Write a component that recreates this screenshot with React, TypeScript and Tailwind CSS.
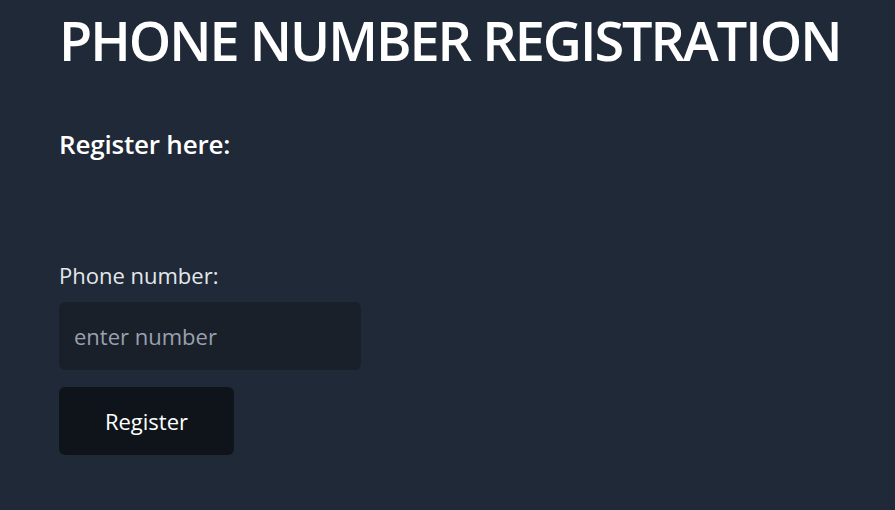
export default function App() {
  return (
    <main className="min-h-screen w-full bg-[#1f2937] text-white pl-[59px] font-['Open_Sans','Noto_Sans',sans-serif]">
      {/* Heading */}
      <h1 className="pt-[13px] text-[54px] font-semibold leading-none tracking-[-2px] whitespace-nowrap">
        PHONE NUMBER REGISTRATION
      </h1>

      <h2 className="mt-[64px] text-[26px] font-semibold leading-none tracking-[-0.2px]">
        Register here:
      </h2>

      {/* Form */}
      <form className="mt-[107px] flex flex-col items-start" onSubmit={(e) => e.preventDefault()}>
        <label htmlFor="phone" className="text-[22px] leading-none text-gray-200">
          Phone number:
        </label>
        <input
          id="phone"
          type="text"
          placeholder="enter number"
          className="mt-[16px] w-[302px] h-[68px] rounded-md bg-[#19202a] px-[15px] text-[22px] text-white placeholder:text-gray-400 outline-none"
        />
        <button
          type="submit"
          className="mt-[17px] w-[175px] h-[68px] rounded-md bg-[#0e141a] text-[22px] text-white"
        >
          Register
        </button>
      </form>
    </main>
  );
}
